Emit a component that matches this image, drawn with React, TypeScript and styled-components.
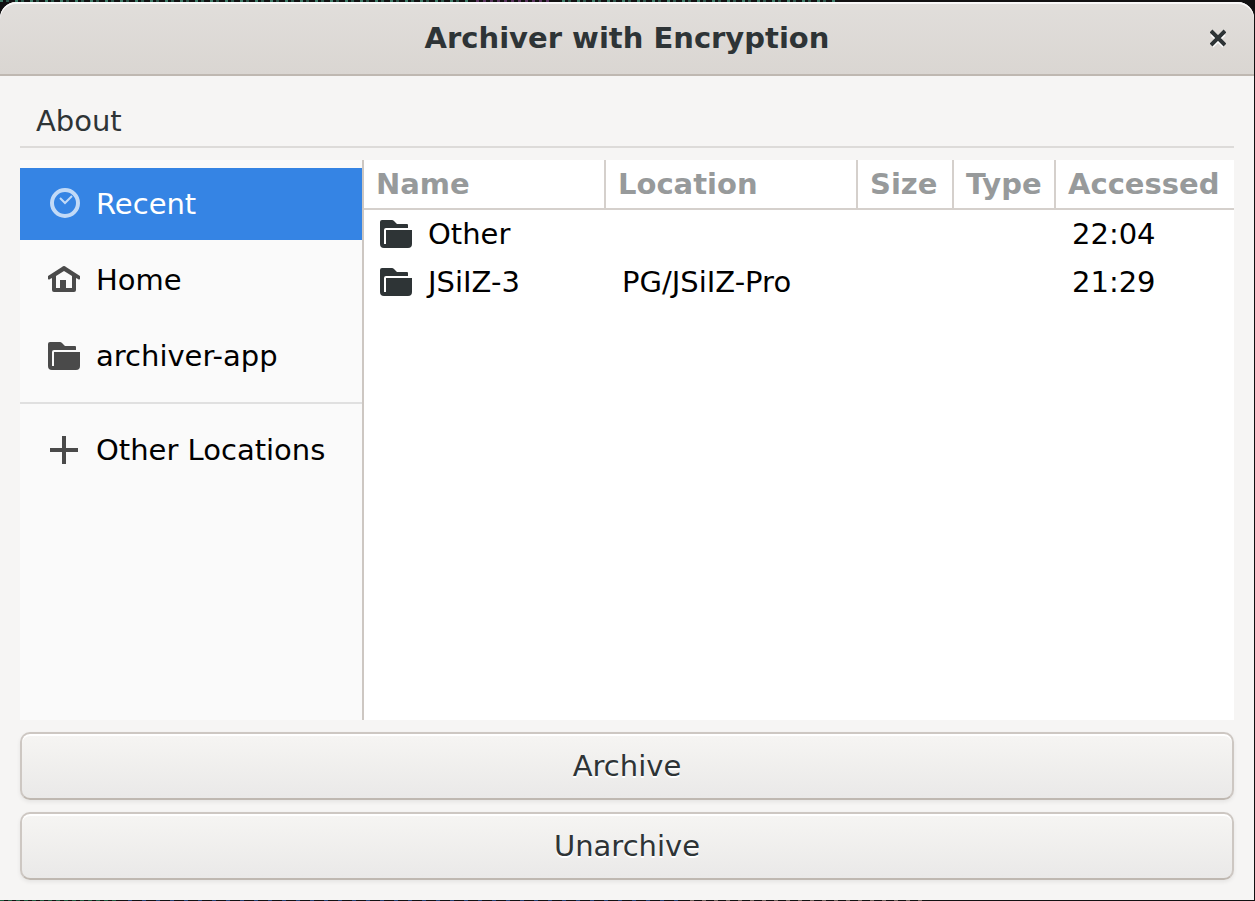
import React from "react";
import styled, { createGlobalStyle, css } from "styled-components";

const GlobalStyle = createGlobalStyle`
  *, *::before, *::after { box-sizing: border-box; }
  body {
    margin: 0;
    background: #121112;
    font-family: "DejaVu Sans", sans-serif;
    font-size: 29px;
    line-height: 34px;
    color: #2e3436;
  }
  button { font: inherit; color: inherit; }
`;

const Desktop = styled.div`
  display: flex;
  min-height: 100vh;
  padding: 2px 1px 1px 0;
  background:
    repeating-linear-gradient(90deg, #3f7d6a 0 3px, #121112 3px 6px, #2c5549 6px 9px, #121112 9px 15px) 0 0 / 470px 2px no-repeat,
    repeating-linear-gradient(90deg, #5b3560 0 3px, #121112 3px 7px) 476px 0 / 74px 2px no-repeat,
    repeating-linear-gradient(90deg, #3f7d6a 0 3px, #121112 3px 6px, #2c5549 6px 9px, #121112 9px 15px) 562px 0 / 275px 2px no-repeat,
    repeating-linear-gradient(90deg, #226043 0 4px, #121112 4px 8px) 0 100% / 118px 1px no-repeat,
    repeating-linear-gradient(90deg, #26457c 0 4px, #121112 4px 14px) 128px 100% / 550px 1px no-repeat,
    repeating-linear-gradient(90deg, #75655f 0 4px, #121112 4px 12px) 690px 100% / 240px 1px no-repeat,
    #121112;
`;

const Window = styled.div`
  display: flex;
  flex: 1;
  flex-direction: column;
  min-width: 0;
  overflow: hidden;
  border-radius: 16px 16px 0 0;
  background: #f6f5f4;
`;

const TitleBar = styled.header`
  display: grid;
  grid-template-columns: 72px 1fr 72px;
  align-items: center;
  height: 74px;
  border-bottom: 2px solid #bfb8b1;
  border-radius: 16px 16px 0 0;
  background: linear-gradient(#e1dedb, #dad6d2);
  box-shadow: inset 0 2px #f9f8f8;
`;

const Title = styled.h1`
  grid-column: 2;
  margin: 0;
  font-size: 29px;
  line-height: 34px;
  text-align: center;
`;

const CloseButton = styled.button`
  display: grid;
  place-items: center;
  justify-self: center;
  width: 48px;
  height: 48px;
  padding: 0;
  border: 0;
  background: none;
`;

const Content = styled.main`
  display: flex;
  flex: 1;
  flex-direction: column;
  gap: 12px;
  padding: 20px;
`;

const MenuBar = styled.nav`
  display: flex;
  height: 52px;
  border-bottom: 2px solid #dddbd9;
`;

const MenuItem = styled.button`
  padding: 0 16px;
  border: 0;
  background: none;
`;

const Chooser = styled.section`
  display: flex;
  flex: 1;
  background: #fff;
`;

const Sidebar = styled.nav`
  display: flex;
  flex: 0 0 344px;
  flex-direction: column;
  gap: 4px;
  padding: 8px 0;
  border-right: 2px solid #cdc7c2;
  background: #fafafa;
`;

const Place = styled.button<{ $selected?: boolean }>`
  display: flex;
  align-items: center;
  gap: 16px;
  height: 72px;
  padding: 0 28px;
  border: 0;
  background: none;
  color: #000;
  white-space: nowrap;
  svg { color: #4a4a4a; }
  ${(p) =>
    p.$selected &&
    css`
      background: #3584e4;
      color: #fff;
      svg { color: #c2daf7; }
    `}
`;

const Separator = styled.hr`
  width: 100%;
  height: 2px;
  margin: 6px 0;
  border: 0;
  background: #e0e0e0;
`;

const Files = styled.div`
  flex: 1;
  min-width: 0;
`;

const FileTable = styled.table`
  width: 100%;
  border-collapse: separate;
  border-spacing: 0;
  table-layout: fixed;
`;

const Column = styled.col<{ $width?: number }>`
  width: ${(p) => (p.$width ? `${p.$width}px` : "auto")};
`;

const HeadCell = styled.th`
  height: 50px;
  padding: 0 0 0 12px;
  border-bottom: 2px solid #d5d0cc;
  color: #979a9b;
  text-align: left;
  white-space: nowrap;
  &:not(:last-child) { border-right: 2px solid #d5d0cc; }
`;

const Cell = styled.td`
  height: 48px;
  padding: 0 0 0 16px;
  color: #000;
  white-space: nowrap;
`;

const FileName = styled.span`
  display: flex;
  align-items: center;
  gap: 16px;
  svg { color: #2e3436; }
`;

const ActionButton = styled.button`
  height: 68px;
  border: 2px solid #cdc7c2;
  border-bottom-color: #bfb8b1;
  border-radius: 10px;
  background: linear-gradient(#f6f5f3, #eae9e8);
  box-shadow: inset 0 2px #fff, 0 2px 4px rgba(0, 0, 0, 0.07);
  text-shadow: 0 2px #fff;
`;

const Icon = styled.svg`
  flex: none;
  width: 32px;
  height: 32px;
  fill: currentColor;
`;

const FolderIcon = () => (
  <Icon viewBox="0 0 32 32" aria-hidden="true">
    <path d="M2 2H12Q13 2 14 3L17 6H27Q28 6 28 7V10H6Q4 10 4 12V26H6V12H32V26Q32 30 28 30H4Q0 30 0 26V4Q0 2 2 2Z" />
  </Icon>
);

const ClockIcon = () => (
  <Icon viewBox="0 0 32 32" aria-hidden="true">
    <circle cx="17" cy="15" r="13" fill="none" stroke="currentColor" strokeWidth="4" />
    <path d="M12 10L17 15L24 8" fill="none" stroke="currentColor" strokeWidth="2" />
  </Icon>
);

const HomeIcon = () => (
  <Icon viewBox="0 0 32 32" aria-hidden="true">
    <path fillRule="evenodd" d="M16 2Q17 2 18 3L32 12V15Q31 16 30 15L28 14V26Q28 28 26 28H6Q4 28 4 26V14L2 15Q1 16 0 15V12L14 3Q15 2 16 2ZM16 7L8 12V24H12V16H18V24H24V12Z" />
  </Icon>
);

const PlusIcon = () => (
  <Icon viewBox="0 0 32 32" aria-hidden="true">
    <path d="M14 2H18V14H30V18H18V30H14V18H2V14H14Z" />
  </Icon>
);

const CloseIcon = () => (
  <svg width="16" height="20" viewBox="0 -2 16 20" aria-hidden="true">
    <path d="M2 4L14 16M14 4L2 16" stroke="#fff" strokeWidth="4" />
    <path d="M1 1L15 15M15 1L1 15" stroke="#2e3436" strokeWidth="4" />
  </svg>
);

const files = [
  { name: "Other", location: "", accessed: "22:04" },
  { name: "JSiIZ-3", location: "PG/JSiIZ-Pro", accessed: "21:29" },
];

export default function App() {
  return (
    <Desktop>
      <GlobalStyle />
      <Window>
        <TitleBar>
          <Title>Archiver with Encryption</Title>
          <CloseButton aria-label="Close">
            <CloseIcon />
          </CloseButton>
        </TitleBar>
        <Content>
          <MenuBar>
            <MenuItem>About</MenuItem>
          </MenuBar>
          <Chooser>
            <Sidebar>
              <Place $selected>
                <ClockIcon />
                Recent
              </Place>
              <Place>
                <HomeIcon />
                Home
              </Place>
              <Place>
                <FolderIcon />
                archiver-app
              </Place>
              <Separator />
              <Place>
                <PlusIcon />
                Other Locations
              </Place>
            </Sidebar>
            <Files>
              <FileTable>
                <colgroup>
                  <Column />
                  <Column $width={252} />
                  <Column $width={96} />
                  <Column $width={102} />
                  <Column $width={178} />
                </colgroup>
                <thead>
                  <tr>
                    <HeadCell>Name</HeadCell>
                    <HeadCell>Location</HeadCell>
                    <HeadCell>Size</HeadCell>
                    <HeadCell>Type</HeadCell>
                    <HeadCell>Accessed</HeadCell>
                  </tr>
                </thead>
                <tbody>
                  {files.map((file) => (
                    <tr key={file.name}>
                      <Cell>
                        <FileName>
                          <FolderIcon />
                          {file.name}
                        </FileName>
                      </Cell>
                      <Cell>{file.location}</Cell>
                      <Cell />
                      <Cell />
                      <Cell>{file.accessed}</Cell>
                    </tr>
                  ))}
                </tbody>
              </FileTable>
            </Files>
          </Chooser>
          <ActionButton>Archive</ActionButton>
          <ActionButton>Unarchive</ActionButton>
        </Content>
      </Window>
    </Desktop>
  );
}
